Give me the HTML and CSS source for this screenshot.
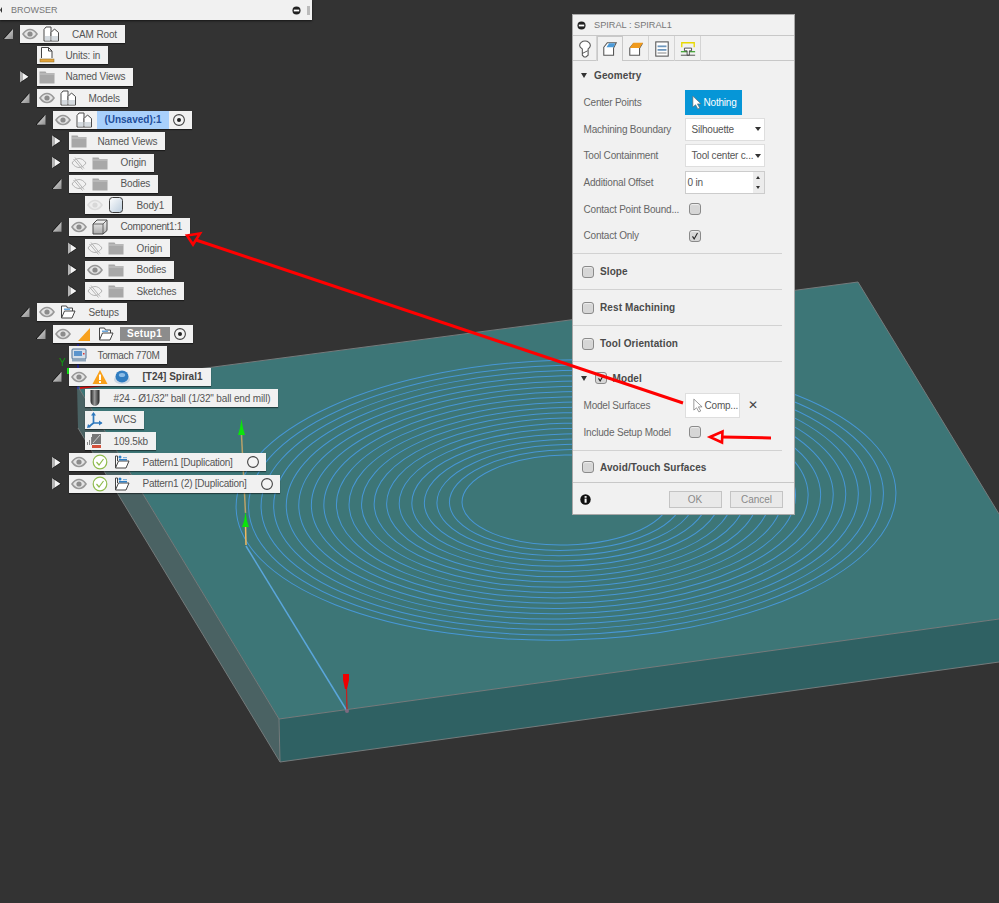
FILE: index.html
```html
<!DOCTYPE html>
<html lang="en">
<head>
<meta charset="utf-8">
<title>Spiral toolpath</title>
<link rel="stylesheet" href="styles.css">
</head>
<body>
<svg class="defs" width="0" height="0" aria-hidden="true">
  <defs>
    <linearGradient id="gTool" x1="0" x2="1" y1="0" y2="0"><stop offset="0" stop-color="#222"/><stop offset=".45" stop-color="#999"/><stop offset="1" stop-color="#222"/></linearGradient>
    <linearGradient id="gBody" x1="0" x2="1" y1="0" y2="1"><stop offset="0" stop-color="#fff"/><stop offset="1" stop-color="#b9cbdc"/></linearGradient>
    <linearGradient id="gBox" x1="0" x2="0" y1="0" y2="1"><stop offset="0" stop-color="#f4f4f4"/><stop offset="1" stop-color="#a9a9a9"/></linearGradient>
    <symbol id="eye" viewBox="0 0 16 16"><path d="M1 8c2-3 4.500-4.500 7-4.500S13 5 15 8c-2 3-4.500 4.500-7 4.500S3 11 1 8z" fill="#e4e4e4" stroke="#989898" stroke-width="1.600"/><circle cx="8" cy="8" r="2.600" fill="#8c8c8c"/></symbol>
    <symbol id="eyeoff" viewBox="0 0 16 16"><path d="M1 8c2-3 4.500-4.500 7-4.500S13 5 15 8c-2 3-4.500 4.500-7 4.500S3 11 1 8z" fill="none" stroke="#b4b4b4" stroke-width="1"/><path d="M4 2.500l9 11M2.500 4l9 10.500" stroke="#b4b4b4" stroke-width="1" fill="none"/></symbol>
    <symbol id="eyefaint" viewBox="0 0 16 16"><path d="M1 8c2-3 4.500-4.500 7-4.500S13 5 15 8c-2 3-4.500 4.500-7 4.500S3 11 1 8z" fill="#eee" stroke="#dcdcdc" stroke-width="1.600"/><circle cx="8" cy="8" r="2.600" fill="#d8d8d8"/></symbol>
    <symbol id="comp" viewBox="0 0 16 16"><path d="M1 3.500L3 1h5v14H1z" fill="#fff" stroke="#4a4a4a"/><path d="M8 6.500L11.500 3l4 3.500V15H8z" fill="#fff" stroke="#4a4a4a"/><rect x="2" y="10" width="5.500" height="4.500" fill="#d5dbe0"/><rect x="8.500" y="10" width="6.500" height="4.500" fill="#d5dbe0"/></symbol>
    <symbol id="doc" viewBox="0 0 16 16"><path d="M2.500 11V.5h7l3.500 3.500v7" fill="#fff" stroke="#444"/><path d="M9.500.5V4H13" fill="none" stroke="#444"/><rect x="1" y="12" width="14" height="3" fill="#e2a33a" stroke="#8a6a20" stroke-width=".5"/></symbol>
    <symbol id="folder" viewBox="0 0 16 16"><path d="M.5 2.500h6l1 1.500h8v10.500H.5z" fill="#a8a8a8"/><path d="M.5 5h15" stroke="#d0d0d0" stroke-width=".8"/></symbol>
    <symbol id="body" viewBox="0 0 16 16"><rect x="1.500" y=".5" width="13" height="15" rx="3" fill="url(#gBody)" stroke="#3a3a3a"/></symbol>
    <symbol id="box" viewBox="0 0 16 16"><path d="M1 5L5 1h10v10.500L11 15H1z" fill="url(#gBox)" stroke="#4a4a4a"/><path d="M1 5h10v10M11 5l4-4" fill="none" stroke="#4a4a4a" stroke-width=".8"/></symbol>
    <symbol id="ofolder" viewBox="0 0 16 16"><path d="M1.500 14V2h5l1 2h5v3" fill="#fff" stroke="#444"/><path d="M1.500 14L4.500 7H15l-3 7z" fill="#fff" stroke="#444"/><rect x="4" y="4.500" width="6" height="1.500" fill="#6aa7dd"/></symbol>
    <symbol id="pfolder" viewBox="0 0 16 16"><path d="M1.500 14V2h2v5" fill="#fff" stroke="#444"/><path d="M1.500 14L4.500 7H15l-3 7z" fill="#fff" stroke="#444"/><circle cx="6" cy="3" r="1.500" fill="#2f7fc4"/><rect x="5" y="5" width="8" height="1.500" fill="#2f7fc4"/><rect x="9" y="3" width="4" height="1.200" fill="#7fb3de"/></symbol>
    <symbol id="tri" viewBox="0 0 16 16"><path d="M2 15L14 2v13z" fill="#f7a11f"/></symbol>
    <symbol id="warn" viewBox="0 0 16 16"><path d="M8 1l7.500 14H.5z" fill="#f9a11b"/><rect x="7" y="5.500" width="2" height="5.500" fill="#fff"/><rect x="7" y="12" width="2" height="2" fill="#fff"/></symbol>
    <symbol id="mill" viewBox="0 0 16 16"><ellipse cx="8" cy="10.500" rx="8" ry="4.500" fill="#c9d6e2"/><ellipse cx="8" cy="7.500" rx="6.500" ry="6" fill="#2f7cc0"/><ellipse cx="8" cy="6" rx="3.200" ry="2" fill="#8bbce6"/></symbol>
    <symbol id="tool" viewBox="0 0 16 16"><path d="M3.500 0h9v11a4.500 5 0 0 1-9 0z" fill="url(#gTool)"/></symbol>
    <symbol id="wcs" viewBox="0 0 16 16"><path d="M6.500 2v9M6.500 11L1.500 15M6.500 11h8" fill="none" stroke="#2f78bd" stroke-width="1.700"/><path d="M6.500 0l2.500 3.500H4zM15.500 11l-3.500 2.500v-5zM0 16l1-4 3 3z" fill="#2f78bd"/></symbol>
    <symbol id="stats" viewBox="0 0 16 16"><rect x="5" y="1" width="9" height="10" fill="#777"/><path d="M6 10L13 2" stroke="#ddd" stroke-width=".8"/><rect x="0" y="9" width="1" height="3" fill="#888"/><rect x="2" y="7" width="1" height="5" fill="#888"/><rect x="4" y="4" width="1" height="8" fill="#888"/><rect x="5" y="12" width="9" height="3" fill="#d4503a"/></symbol>
    <symbol id="machine" viewBox="0 0 16 16"><rect x="1" y="2" width="14" height="10" rx="1" fill="#d6dfe8" stroke="#4e7094"/><rect x="3" y="4" width="8" height="5" fill="#5b94cc"/><rect x="12" y="6" width="1.500" height="1.500" fill="#d33"/><rect x="1" y="12" width="14" height="2.500" fill="#8fa6bb"/></symbol>
    <symbol id="check" viewBox="0 0 16 16"><circle cx="8" cy="8" r="6.800" fill="#fff" stroke="#8fbb4d" stroke-width="1.200"/><path d="M4.500 8l2.500 3 4.500-6" fill="none" stroke="#8fbb4d" stroke-width="1.200"/></symbol>
    <symbol id="radio" viewBox="0 0 14 14"><circle cx="7" cy="7" r="5.400" fill="#f4f4f4" stroke="#444" stroke-width="1.100"/></symbol>
    <symbol id="radiodot" viewBox="0 0 14 14"><circle cx="7" cy="7" r="5.400" fill="#f4f4f4" stroke="#444" stroke-width="1.100"/><circle cx="7" cy="7" r="2" fill="#222"/></symbol>
    <symbol id="cursor" viewBox="0 0 12 16"><path d="M2 1v12l3-2.500L7.500 15l2-1-2.500-4.500h4z" fill="currentColor" stroke="#666" stroke-width=".7"/></symbol>
    <symbol id="minus" viewBox="0 0 10 10"><circle cx="5" cy="5" r="4.500" fill="#222"/><rect x="2" y="4" width="6" height="2" fill="#fff"/></symbol>
    <symbol id="tab1" viewBox="0 0 18 20"><path d="M3 6a6 5 0 0 1 12 0c0 2-1.500 3-2.500 4v7L10 19H8l-2-2v-7C5 9 3 8 3 6z" fill="#fff" stroke="#555" stroke-width="1.200"/><path d="M6 15l6-3" stroke="#444"/></symbol>
    <symbol id="tab2" viewBox="0 0 18 20"><path d="M2 8l4-5h10l-3 6v8H2z" fill="#fff" stroke="#555" stroke-width="1.200"/><path d="M5 8l3-4.500h7L13 8z" fill="#4b9ad8"/></symbol>
    <symbol id="tab3" viewBox="0 0 18 20"><path d="M2 9l4-5h10l-3 5v8H2z" fill="#fff" stroke="#555" stroke-width="1.200"/><path d="M2 9l4-6h11l-4 6z" fill="#f09a1d"/></symbol>
    <symbol id="tab4" viewBox="0 0 18 20"><rect x="2" y="2" width="14" height="16" fill="#fff" stroke="#555" stroke-width="1.200"/><rect x="4" y="6" width="10" height="2" fill="#6e97bd"/><rect x="4" y="10" width="10" height="2" fill="#6e97bd"/><rect x="4" y="14" width="10" height="1" fill="#777"/></symbol>
    <symbol id="tab5" viewBox="0 0 18 20"><path d="M2 8V3h14v5" fill="none" stroke="#e8d800" stroke-width="1.500"/><path d="M1 13h16" stroke="#49a83c" stroke-width="1.500"/><path d="M5 9h8v3h-2.500v5H8v-5H5z" fill="#fff" stroke="#444"/><path d="M1 17h16" stroke="#444"/></symbol>
    <symbol id="info" viewBox="0 0 12 12"><circle cx="6" cy="6" r="5.700" fill="#111"/><rect x="5" y="5" width="2.200" height="4.500" fill="#fff"/><rect x="5" y="2.300" width="2.200" height="1.800" fill="#fff"/></symbol>
    <symbol id="tick" viewBox="0 0 12 12"><path d="M3 6.500l2 3 4-7" fill="none" stroke="#222" stroke-width="1.300"/></symbol>
  </defs>
</svg>

<main class="stage">
  <svg class="scene" width="999" height="903" viewBox="0 0 999 903" aria-hidden="true">
    <polygon class="band" points="77,385 78,428 280,762 279,719"/>
    <polygon class="front" points="279,719 999,619 999,662 280,762"/>
    <polygon class="top" points="858,282 999,514 999,619 279,719 77,385"/>
    <polyline class="edge" points="77,385 858,282 999,514"/>
    <polyline class="edge" points="77,385 279,719 999,619"/>
    <polyline class="edge" points="78,428 280,762 999,662"/>
    <line class="edge" x1="279" y1="719" x2="280" y2="762"/>
    <g class="rings" transform="rotate(-1.400 566 500)">
      <ellipse cx="566" cy="500" rx="104" ry="45"/>
      <ellipse cx="566" cy="500" rx="116.600" ry="50.300"/>
      <ellipse cx="566" cy="500" rx="129.100" ry="55.600"/>
      <ellipse cx="566" cy="500" rx="141.700" ry="60.800"/>
      <ellipse cx="566" cy="500" rx="154.200" ry="66.100"/>
      <ellipse cx="566" cy="500" rx="166.800" ry="71.400"/>
      <ellipse cx="566" cy="500" rx="179.400" ry="76.700"/>
      <ellipse cx="566" cy="500" rx="191.900" ry="82"/>
      <ellipse cx="566" cy="500" rx="204.500" ry="87.200"/>
      <ellipse cx="566" cy="500" rx="217" ry="92.500"/>
      <ellipse cx="566" cy="500" rx="229.600" ry="97.800"/>
      <ellipse cx="566" cy="500" rx="242.200" ry="103.100"/>
      <ellipse cx="566" cy="500" rx="254.700" ry="108.400"/>
      <ellipse cx="566" cy="500" rx="267.300" ry="113.600"/>
      <ellipse cx="566" cy="500" rx="279.800" ry="118.900"/>
      <ellipse cx="566" cy="500" rx="292.400" ry="124.200"/>
      <ellipse cx="566" cy="500" rx="305" ry="129.500"/>
      <ellipse cx="566" cy="500" rx="317.500" ry="134.800"/>
      <ellipse cx="566" cy="500" rx="330" ry="140"/>
    </g>
    <line class="lead" x1="246" y1="546" x2="347" y2="711"/>
    <line class="shaft" x1="241.500" y1="435" x2="245.500" y2="513"/>
    <line class="shaft-lit" x1="245.500" y1="525" x2="246" y2="545"/>
    <polygon class="arrow-green" points="241.500,419 243,428 245,435 238,435 240,428"/>
    <polygon class="arrow-green" points="245.500,512 247,521 249,527 242,527 244,521"/>
    <polygon class="arrow-red" points="343,674 349,674 349,680 347,689 345,689 343,680"/>
    <line class="red-thin" x1="346.500" y1="689" x2="347" y2="710"/>
    <circle class="red-dot" cx="347" cy="711" r="2"/>
    <line class="axis-blue" x1="78" y1="344" x2="78" y2="352"/>
    <line class="axis-blue" x1="78" y1="364" x2="78" y2="389"/>
    <line class="axis-red" x1="80" y1="388" x2="103" y2="385"/>
    <rect class="axis-green" x="67" y="368" width="2" height="6"/>
    <text class="axis-y" x="59" y="366">Y</text>
  </svg>

  <aside class="browser">
    <header class="browser-bar">
      <span class="bar-left"></span>
      <span class="browser-title">BROWSER</span>
      <svg class="bar-min"><use href="#minus"/></svg>
      <span class="bar-grip"></span>
    </header>
    <div class="tree">
      <div class="row l0"><span class="caret down"></span><div class="node"><svg class="slot"><use href="#eye"/></svg><svg class="slot2"><use href="#comp"/></svg><span class="label">CAM Root</span></div></div>
      <div class="row l1"><span class="caret"></span><div class="node"><svg class="slot"><use href="#doc"/></svg><span class="label wide">Units: in</span></div></div>
      <div class="row l1"><span class="caret right"></span><div class="node"><svg class="slot"><use href="#folder"/></svg><span class="label wide">Named Views</span></div></div>
      <div class="row l1"><span class="caret down"></span><div class="node"><svg class="slot"><use href="#eye"/></svg><svg class="slot2"><use href="#comp"/></svg><span class="label">Models</span></div></div>
      <div class="row l2"><span class="caret down"></span><div class="node"><svg class="slot"><use href="#eye"/></svg><svg class="slot2"><use href="#comp"/></svg><span class="chip chip-blue">(Unsaved):1</span><svg class="radio"><use href="#radiodot"/></svg></div></div>
      <div class="row l3"><span class="caret right"></span><div class="node"><svg class="slot"><use href="#folder"/></svg><span class="label wide">Named Views</span></div></div>
      <div class="row l3"><span class="caret right"></span><div class="node"><svg class="slot"><use href="#eyeoff"/></svg><svg class="slot2"><use href="#folder"/></svg><span class="label">Origin</span></div></div>
      <div class="row l3"><span class="caret down"></span><div class="node"><svg class="slot"><use href="#eyeoff"/></svg><svg class="slot2"><use href="#folder"/></svg><span class="label">Bodies</span></div></div>
      <div class="row l4"><span class="caret"></span><div class="node"><svg class="slot"><use href="#eyefaint"/></svg><svg class="slot2"><use href="#body"/></svg><span class="label">Body1</span></div></div>
      <div class="row l3"><span class="caret down"></span><div class="node"><svg class="slot"><use href="#eye"/></svg><svg class="slot2"><use href="#box"/></svg><span class="label tight">Component1:1</span></div></div>
      <div class="row l4"><span class="caret right"></span><div class="node"><svg class="slot"><use href="#eyeoff"/></svg><svg class="slot2"><use href="#folder"/></svg><span class="label">Origin</span></div></div>
      <div class="row l4"><span class="caret right"></span><div class="node"><svg class="slot"><use href="#eye"/></svg><svg class="slot2"><use href="#folder"/></svg><span class="label">Bodies</span></div></div>
      <div class="row l4"><span class="caret right"></span><div class="node"><svg class="slot"><use href="#eyeoff"/></svg><svg class="slot2"><use href="#folder"/></svg><span class="label">Sketches</span></div></div>
      <div class="row l1"><span class="caret down"></span><div class="node"><svg class="slot"><use href="#eye"/></svg><svg class="slot2"><use href="#ofolder"/></svg><span class="label">Setups</span></div></div>
      <div class="row l2"><span class="caret down"></span><div class="node"><svg class="slot"><use href="#eye"/></svg><svg class="slot2"><use href="#tri"/></svg><svg class="slot2"><use href="#ofolder"/></svg><span class="chip chip-gray">Setup1</span><svg class="radio"><use href="#radiodot"/></svg></div></div>
      <div class="row l3"><span class="caret"></span><div class="node"><svg class="slot"><use href="#machine"/></svg><span class="label wide tight">Tormach 770M</span></div></div>
      <div class="row l3"><span class="caret down"></span><div class="node"><svg class="slot"><use href="#eye"/></svg><svg class="slot2"><use href="#warn"/></svg><svg class="slot2"><use href="#mill"/></svg><span class="label strong">[T24] Spiral1</span></div></div>
      <div class="row l4"><span class="caret"></span><div class="node"><svg class="slot"><use href="#tool"/></svg><span class="label wide">#24 - Ø1/32" ball (1/32" ball end mill)</span></div></div>
      <div class="row l4"><span class="caret"></span><div class="node"><svg class="slot"><use href="#wcs"/></svg><span class="label wide">WCS</span></div></div>
      <div class="row l4"><span class="caret"></span><div class="node"><svg class="slot"><use href="#stats"/></svg><span class="label wide">109.5kb</span></div></div>
      <div class="row l3"><span class="caret right"></span><div class="node"><svg class="slot"><use href="#eye"/></svg><svg class="slot2"><use href="#check"/></svg><svg class="slot2"><use href="#pfolder"/></svg><span class="label snug">Pattern1 [Duplication]</span><svg class="radio end"><use href="#radio"/></svg></div></div>
      <div class="row l3"><span class="caret right"></span><div class="node"><svg class="slot"><use href="#eye"/></svg><svg class="slot2"><use href="#check"/></svg><svg class="slot2"><use href="#pfolder"/></svg><span class="label snug">Pattern1 (2) [Duplication]</span><svg class="radio end"><use href="#radio"/></svg></div></div>
    </div>
  </aside>

  <section class="panel">
    <header class="panel-head">
      <svg class="panel-min"><use href="#minus"/></svg>
      <span class="panel-title">SPIRAL : SPIRAL1</span>
    </header>
    <nav class="tabs">
      <span class="tab"><svg class="tab-icon"><use href="#tab1"/></svg></span>
      <span class="tab active"><svg class="tab-icon"><use href="#tab2"/></svg></span>
      <span class="tab"><svg class="tab-icon"><use href="#tab3"/></svg></span>
      <span class="tab"><svg class="tab-icon"><use href="#tab4"/></svg></span>
      <span class="tab"><svg class="tab-icon"><use href="#tab5"/></svg></span>
    </nav>
    <div class="section sec-geometry">
      <div class="sec-head open"><span class="tri-down"></span><span class="sec-title">Geometry</span></div>
      <div class="field"><span class="field-label">Center Points</span><button class="pick active-pick"><svg class="cursor"><use href="#cursor"/></svg>Nothing</button></div>
      <div class="field"><span class="field-label">Machining Boundary</span><div class="select"><span>Silhouette</span><i class="select-arrow"></i></div></div>
      <div class="field"><span class="field-label">Tool Containment</span><div class="select"><span>Tool center c...</span><i class="select-arrow"></i></div></div>
      <div class="field"><span class="field-label">Additional Offset</span><div class="number"><span class="number-value">0 in</span><span class="spin"><i class="spin-up"></i><i class="spin-down"></i></span></div></div>
      <div class="field"><span class="field-label">Contact Point Bound...</span><span class="check check-field"></span></div>
      <div class="field"><span class="field-label">Contact Only</span><span class="check check-field"><svg class="tick"><use href="#tick"/></svg></span></div>
    </div>
    <div class="section sec-collapsed"><span class="check"></span><span class="sec-title">Slope</span></div>
    <div class="section sec-collapsed"><span class="check"></span><span class="sec-title">Rest Machining</span></div>
    <div class="section sec-collapsed"><span class="check"></span><span class="sec-title">Tool Orientation</span></div>
    <div class="section sec-model">
      <div class="sec-head model-head"><span class="tri-down"></span><span class="check"><svg class="tick"><use href="#tick"/></svg></span><span class="sec-title">Model</span></div>
      <div class="field"><span class="field-label">Model Surfaces</span><button class="pick plain-pick"><svg class="cursor"><use href="#cursor"/></svg>Comp...</button><span class="clear">✕</span></div>
      <div class="field"><span class="field-label">Include Setup Model</span><span class="check check-field"></span></div>
    </div>
    <div class="section sec-collapsed last"><span class="check"></span><span class="sec-title">Avoid/Touch Surfaces</span></div>
    <footer class="panel-foot">
      <svg class="info"><use href="#info"/></svg>
      <button class="btn">OK</button>
      <button class="btn">Cancel</button>
    </footer>
  </section>

  <svg class="notes" width="999" height="903" viewBox="0 0 999 903" aria-hidden="true">
    <path class="note-line" d="M196 240L683 403"/>
    <path class="note-head" d="M187 235.500L200 233.500L193 244.500Z"/>
    <path class="note-line" d="M722 437L771 438"/>
    <path class="note-head" d="M710 437L722.500 431.500L722 442.500Z"/>
  </svg>
</main>
</body>
</html>
```
FILE: styles.css
```css
* { box-sizing: border-box; }
html, body { margin: 0; padding: 0; }
body { width: 999px; height: 903px; overflow: hidden; background: #333; font-family: "Liberation Sans", Arial, sans-serif; }
.defs { position: absolute; }
.stage { position: relative; width: 999px; height: 903px; overflow: hidden; background: #333; }

/* 3D viewport */
.scene, .notes { position: absolute; left: 0; top: 0; }
.notes { pointer-events: none; }
.top { fill: #3d7677; }
.front { fill: #2f6163; }
.band { fill: #4a6263; }
.edge { fill: none; stroke: #757b7c; stroke-width: 1; }
.rings ellipse { fill: none; stroke: #4797d6; stroke-width: 1; }
.lead { stroke: #5aa6dc; stroke-width: 1.500; }
.shaft { stroke: #b9a26a; stroke-width: 1.500; }
.shaft-lit { stroke: #f0b960; stroke-width: 1.500; }
.arrow-green { fill: #0be40b; }
.arrow-red { fill: #f00000; }
.red-thin { stroke: #c81e1e; stroke-width: 1.200; }
.red-dot { fill: #7d6a80; }
.axis-blue { stroke: #1515e0; stroke-width: 1; }
.axis-red { stroke: #e01010; stroke-width: 2; }
.axis-green { fill: #14e614; }
.axis-y { fill: #0d9a0d; font-size: 10px; }

/* annotation arrows */
.note-line { stroke: #f00; stroke-width: 3; fill: none; }
.note-head { stroke: #f00; stroke-width: 2.600; fill: none; }

/* browser */
.browser { position: absolute; left: 0; top: 0; width: 312px; }
.browser-bar { height: 20px; background: #f1f1f1; display: flex; align-items: center; position: relative; box-shadow: 0 1px 2px rgba(0,0,0,.6); }
.bar-left { width: 0; height: 0; border: 3px solid transparent; border-right: 2px solid #333; border-left: 0; }
.browser-title { margin-left: 9px; font-size: 9px; color: #777; }
.bar-min { width: 9px; height: 9px; margin-left: auto; margin-right: 6px; }
.bar-grip { width: 3px; height: 9px; background: #bbb; margin-right: 2px; }

.tree { margin-top: 5px; }
.row { display: flex; align-items: center; height: 18px; margin-bottom: 3.430px; }
.l0 { padding-left: 4px; }
.l1 { padding-left: 20.500px; }
.l2 { padding-left: 36.500px; }
.l3 { padding-left: 52.500px; }
.l4 { padding-left: 68.500px; }
.caret { flex: 0 0 16px; height: 12px; position: relative; }
.caret.down { filter: drop-shadow(-1px 0 0 #111); }
.caret.right { filter: drop-shadow(1px 0 0 #111); }
.caret.down::before { content: ""; position: absolute; left: 0; top: 1px; width: 9px; height: 10px; background: linear-gradient(135deg, #e2e2e2, #8c8c8c); clip-path: polygon(100% 0, 100% 100%, 0 100%); }
.caret.right::before { content: ""; position: absolute; left: -1px; top: 0; width: 9px; height: 12px; background: linear-gradient(90deg, #b4b4b4 0 35%, #f4f4f4 35%); clip-path: polygon(0 0, 100% 50%, 0 100%); }
.node { display: flex; align-items: center; height: 18px; background: #f1f1f1; padding-right: 8px; box-shadow: 0 1px 1px rgba(0,0,0,.45); }
.slot { flex: 0 0 20px; width: 20px; height: 16px; }
.slot2 { flex: 0 0 22px; width: 22px; height: 16px; }
.label { margin-left: 10px; font-size: 10px; letter-spacing: -.15px; color: #555; white-space: nowrap; }
.label.wide { margin-left: 9px; }
.label.tight { letter-spacing: -.35px; }
.label.snug { letter-spacing: -.25px; }
.label.strong { font-weight: 700; color: #444; letter-spacing: 0; }
.chip { display: flex; align-items: center; justify-content: center; font-size: 10px; font-weight: 700; white-space: nowrap; }
.chip-blue { height: 18px; width: 72px; margin-left: 2.500px; background: #a9d0fb; color: #1f4f9c; }
.chip-gray { height: 14px; width: 50px; margin-left: 3px; background: #8c8c8c; color: #fff; letter-spacing: .3px; }
.radio { width: 14px; height: 14px; margin-left: 3px; margin-right: -2px; }
.radio.end { margin-left: 13px; margin-right: -2px; }

/* dialog */
.panel { position: absolute; left: 572px; top: 14px; width: 223px; height: 501px; background: #f1f1f1; border: 1px solid #a8a8a8; color: #555; font-size: 10px; letter-spacing: -.2px; }
.panel-head { display: flex; align-items: center; height: 21px; border-bottom: 1px solid #c8c8c8; }
.panel-min { width: 9px; height: 9px; margin-left: 4px; }
.panel-title { margin-left: 8px; font-size: 9.200px; color: #777; letter-spacing: 0; }
.tabs { display: flex; height: 25px; border-bottom: 1px solid #c8c8c8; }
.tab { flex: 0 0 26px; height: 25px; display: flex; align-items: center; justify-content: center; border-right: 1px solid #d4d4d4; }
.tab:first-child { flex-basis: 24px; }
.tab.active { background: #f1f1f1; height: 25px; border: 1px solid #c8c8c8; border-bottom: 0; }
.tab-icon { width: 16px; height: 18px; }

.section { margin-right: 12px; border-bottom: 1px solid #d2d2d2; }
.sec-geometry { height: 193px; }
.sec-head { display: flex; align-items: center; }
.sec-head.open { height: 28px; padding-left: 8px; }
.tri-down { width: 0; height: 0; border-style: solid; border-width: 5px 3.500px 0; border-color: #333 transparent transparent; }
.sec-title { margin-left: 6px; font-size: 10px; font-weight: 700; color: #4a4a4a; letter-spacing: .1px; }
.sec-head.open .sec-title { margin-left: 7px; }
.field { display: flex; align-items: center; height: 26.700px; padding-left: 10.500px; }
.field-label { flex: 0 0 101px; white-space: nowrap; color: #666; }
.pick { display: flex; align-items: center; height: 24.500px; border: 0; padding: 0 0 0 6px; font: inherit; letter-spacing: -.2px; }
.active-pick { width: 57px; background: #0696d7; color: #fff; }
.plain-pick { width: 55px; background: #fff; color: #555; border: 1px solid #dedede; }
.cursor { width: 11px; height: 15px; margin-right: 2px; }
.active-pick .cursor { color: #fff; }
.plain-pick .cursor { color: #fff; }
.select { display: flex; align-items: center; justify-content: space-between; width: 80px; height: 23px; background: #fff; border: 1px solid #dedede; padding: 0 3px 0 6px; color: #555; white-space: nowrap; }
.select-arrow { flex: 0 0 6px; width: 0; height: 0; border-style: solid; border-width: 4px 3px 0; border-color: #333 transparent transparent; }
.number { display: flex; width: 80px; height: 23px; border: 1px solid #ccc; background: #fff; }
.number-value { flex: 1; display: flex; align-items: center; padding-left: 2px; }
.spin { flex: 0 0 11px; display: flex; flex-direction: column; background: #ececec; }
.spin-up, .spin-down { flex: 1; display: flex; align-items: center; justify-content: center; }
.spin-up::before { content: ""; border-style: solid; border-width: 0 2.500px 3px; border-color: transparent transparent #333; }
.spin-down::before { content: ""; border-style: solid; border-width: 3px 2.500px 0; border-color: #333 transparent transparent; }
.check { flex: 0 0 12px; display: block; width: 12px; height: 12px; border: 1px solid #8a8a8a; border-radius: 3px; background: #d6d6d6; box-shadow: inset 0 1px 1px rgba(255,255,255,.6); }
.check-field { margin-left: 4px; }
.tick { display: block; width: 10px; height: 10px; }
.sec-collapsed { display: flex; align-items: center; height: 36px; padding-left: 9px; }
.sec-model { height: 89px; }
.model-head { height: 30px; padding: 2px 0 0 8px; }
.model-head .check { margin-left: 7.500px; }
.clear { margin-left: 8px; font-size: 12px; color: #444; }
.sec-collapsed.last { height: 32px; padding-top: 1px; margin-right: 0; border-bottom: 1px solid #c8c8c8; }
.panel-foot { display: flex; align-items: center; height: 32px; padding-left: 2px; }
.info { width: 11px; height: 11px; margin-left: 5px; margin-right: auto; }
.btn { width: 53px; height: 17px; margin-right: 8.500px; padding: 0; background: #e9e9e9; border: 1px solid #c4c4c4; color: #8a8a8a; font: 10px "Liberation Sans", Arial, sans-serif; }
.btn:last-child { margin-right: 11px; }
```
